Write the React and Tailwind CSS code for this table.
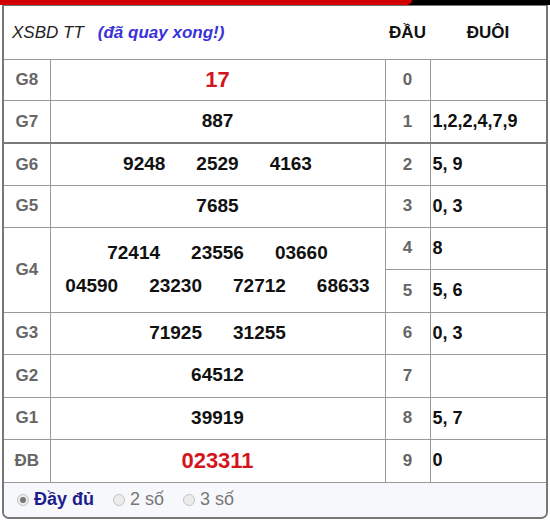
import React from 'react';

const rows = [
  { label: 'G8', nums: ['17'], red: true, dau: '0', duoi: '', h: 'h-[41px]' },
  { label: 'G7', nums: ['887'], dau: '1', duoi: '1,2,2,4,7,9', thick: true, h: 'h-[43px]' },
  { label: 'G6', nums: ['9248', '2529', '4163'], dau: '2', duoi: '5, 9', h: 'h-[42px]' },
  { label: 'G5', nums: ['7685'], dau: '3', duoi: '0, 3', h: 'h-[42px]' },
];

const rowsBottom = [
  { label: 'G3', nums: ['71925', '31255'], dau: '6', duoi: '0, 3', h: 'h-[42px]' },
  { label: 'G2', nums: ['64512'], dau: '7', duoi: '', h: 'h-[43px]' },
  { label: 'G1', nums: ['39919'], dau: '8', duoi: '5, 7', h: 'h-[42px]' },
  { label: 'ĐB', nums: ['023311'], red: true, dau: '9', duoi: '0', h: 'h-[43px]' },
];

const cell = 'border border-[#9a9a9a] p-0';

const Radio = ({ checked, label }) => (
  <label className="flex items-center gap-[5px]">
    <span className="w-[12px] h-[12px] rounded-full border border-[#c4c4c4] bg-[#ececec] flex items-center justify-center">
      {checked && <span className="w-[6px] h-[6px] rounded-full bg-[#777]" />}
    </span>
    <span className={checked ? 'font-bold text-[#1c1c8c]' : 'text-[#777]'}>{label}</span>
  </label>
);

const Row = ({ r }) => {
  const tb = r.thick ? 'border-b-2 border-b-[#7a7a7a]' : '';
  return (
    <tr className={r.h}>
      <td className={`${cell} text-center text-[17px] font-bold text-[#666] ${tb}`}>{r.label}</td>
      <td className={`${cell} ${tb}`}>
        <div className={`flex justify-center gap-[31px] font-bold ${r.red ? 'text-[22px] text-[#d4141c]' : 'text-[19px] text-[#111]'}`}>
          {r.nums.map((n) => <span key={n}>{n}</span>)}
        </div>
      </td>
      <td className={`${cell} text-center text-[17px] font-bold text-[#666] ${tb}`}>{r.dau}</td>
      <td className={`${cell} pl-[2px] text-[18px] font-bold text-[#111] ${tb}`}>{r.duoi}</td>
    </tr>
  );
};

export default function App() {
  return (
    <div className="w-[550px] h-[522px] bg-white" style={{ fontFamily: '"Liberation Sans", Arial, sans-serif' }}>
      {/* top bar */}
      <div className="h-[5px] bg-black">
        <div className="h-full w-[412px] bg-[#d40000] rounded-br-[6px]" />
      </div>
      <div className="mx-[2px] border-2 border-t border-[#777] rounded-b-[7px] overflow-hidden">
        <table className="w-[542px] table-fixed border-collapse border-hidden">
          <colgroup>
            <col className="w-[46px]" />
            <col className="w-[335px]" />
            <col className="w-[45px]" />
            <col className="w-[116px]" />
          </colgroup>
          <thead>
            <tr className="h-[53px]">
              <th colSpan={2} className="text-left pl-[8px] font-normal italic text-[17px] border-b border-[#9a9a9a]">
                <span className="text-[#222]">XSBD TT</span>
                <span className="ml-[14px] font-bold text-[#3a32d8]">(đã quay xong!)</span>
              </th>
              <th className="text-center text-[17px] font-bold text-[#111] border-b border-[#9a9a9a]">ĐẦU</th>
              <th className="text-center text-[17px] font-bold text-[#111] border-b border-[#9a9a9a]">ĐUÔI</th>
            </tr>
          </thead>
          <tbody>
            {rows.map((r) => <Row key={r.label} r={r} />)}
            <tr className="h-[42px]">
              <td rowSpan={2} className={`${cell} text-center text-[17px] font-bold text-[#666]`}>G4</td>
              <td rowSpan={2} className={cell}>
                <div className="flex flex-col items-center gap-[5px] text-[19px] font-bold text-[#111]">
                  <div className="flex gap-[31px]">
                    <span>72414</span><span>23556</span><span>03660</span>
                  </div>
                  <div className="flex gap-[31px]">
                    <span>04590</span><span>23230</span><span>72712</span><span>68633</span>
                  </div>
                </div>
              </td>
              <td className={`${cell} text-center text-[17px] font-bold text-[#666]`}>4</td>
              <td className={`${cell} pl-[2px] text-[18px] font-bold text-[#111]`}>8</td>
            </tr>
            <tr className="h-[43px]">
              <td className={`${cell} text-center text-[17px] font-bold text-[#666]`}>5</td>
              <td className={`${cell} pl-[2px] text-[18px] font-bold text-[#111]`}>5, 6</td>
            </tr>
            {rowsBottom.map((r) => <Row key={r.label} r={r} />)}
          </tbody>
          <tfoot>
            <tr>
              <td colSpan={4} className="h-[35px] bg-[#f7f8fc] border-t border-[#9a9a9a] p-0">
                <div className="flex items-center gap-[19px] pl-[13px] text-[18px]">
                  <Radio checked label="Đầy đủ" />
                  <Radio label="2 số" />
                  <Radio label="3 số" />
                </div>
              </td>
            </tr>
          </tfoot>
        </table>
      </div>
    </div>
  );
}
